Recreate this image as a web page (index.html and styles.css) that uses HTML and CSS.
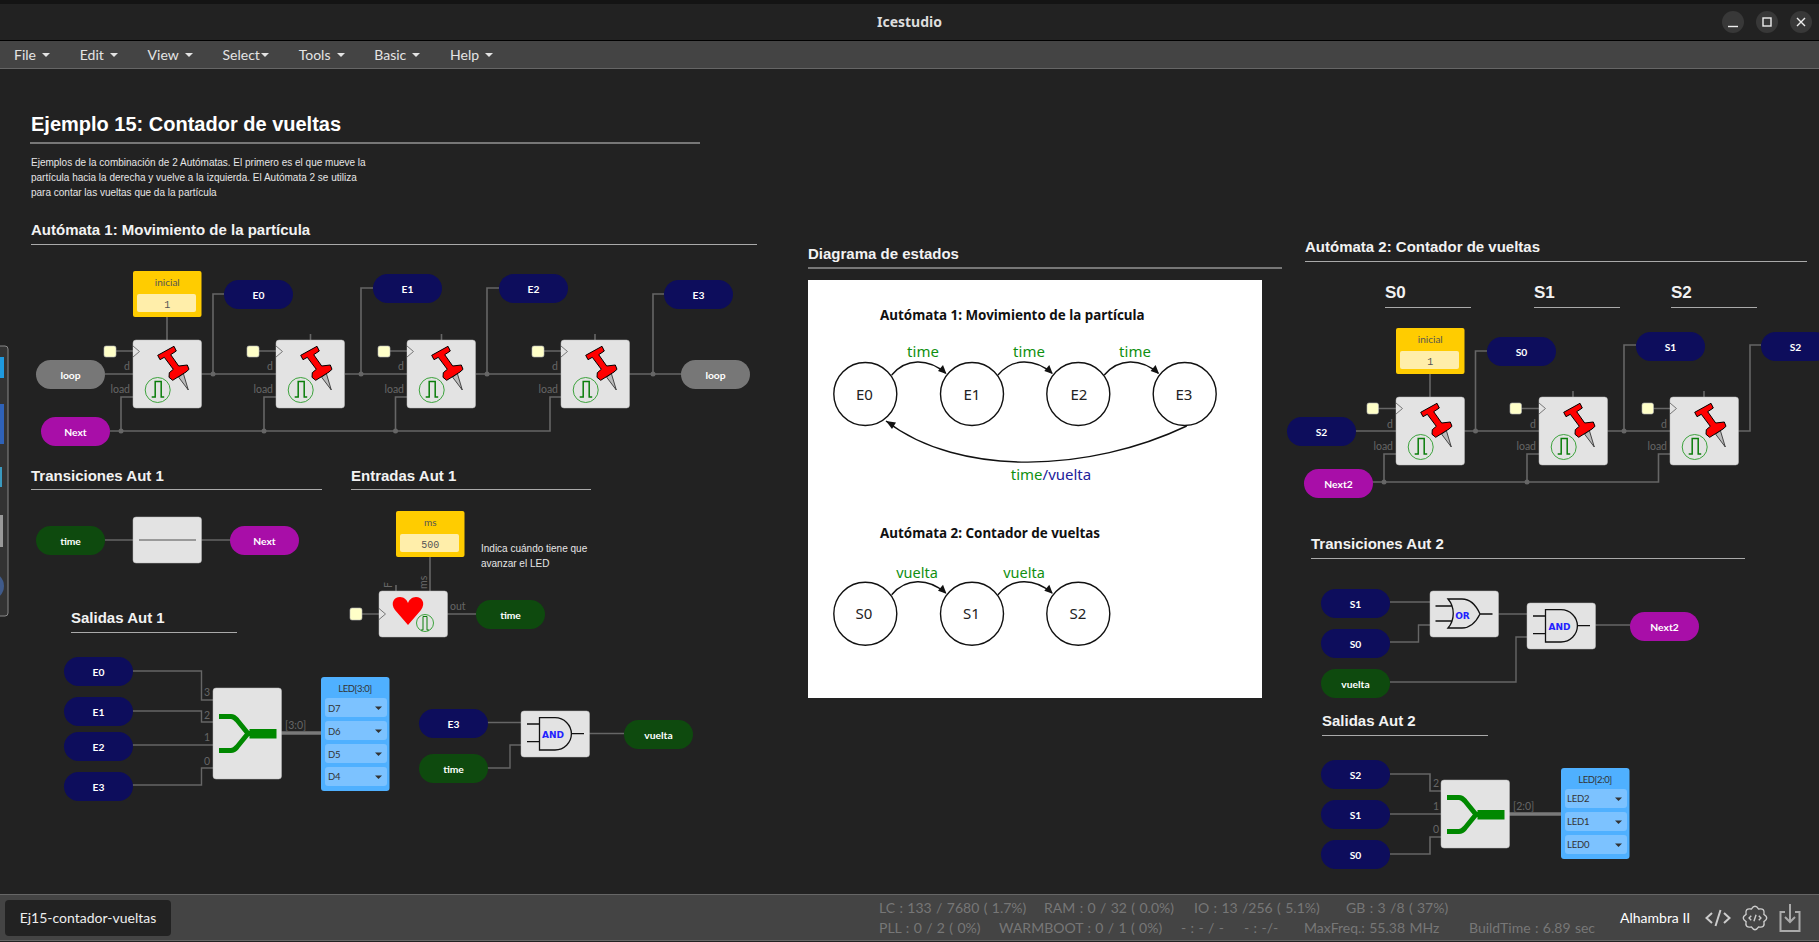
FILE: index.html
```html
<!DOCTYPE html>
<html lang="es">
<head>
    <meta charset="UTF-8">
    <title>Icestudio</title>
    <link rel="stylesheet" href="styles.css">
</head>
<body class="app">
    <header class="titlebar">
        <span class="app_name">Icestudio</span>
        <div class="win_btns">
            <button class="win_btn"><svg width="22" height="22" viewBox="0 0 22 22"><path d="M6 15.5h10"/></svg></button>
            <button class="win_btn"><svg width="22" height="22" viewBox="0 0 22 22"><rect x="7" y="7" width="8" height="8"/></svg></button>
            <button class="win_btn"><svg width="22" height="22" viewBox="0 0 22 22"><path d="M7 7l8 8M15 7l-8 8"/></svg></button>
        </div>
    </header>
    <nav class="menubar">
        <span class="menu_item">File<i class="caret"></i></span>
        <span class="menu_item">Edit<i class="caret"></i></span>
        <span class="menu_item">View<i class="caret"></i></span>
        <span class="menu_item">Select<i class="caret tight"></i></span>
        <span class="menu_item">Tools<i class="caret"></i></span>
        <span class="menu_item">Basic<i class="caret"></i></span>
        <span class="menu_item">Help<i class="caret"></i></span>
    </nav>

    <main class="canvas">
        <!-- same coordinates as the window, the bars above take 69px -->
        <svg class="board" width="1819" height="825" viewBox="0 69 1819 825">
            <defs>
                <g id="pin">
                    <path class="needle" d="M45.7 37.3L50.3 33.3L55.3 50Z"/>
                    <path class="pin_red" d="M24.7 15.3L41 6.3L43.3 11L37.7 14.7L45.7 26L54.3 25L56 29.3L53 32L39.7 40.3L36 37.3L36.3 32.7L40.3 29.3L31.3 17.3L27 19.7Z"/>
                </g>
                <g id="clk">
                    <circle class="clk_ring" r="12.5"/>
                    <path class="clk_wave" d="M-6 7H-2.5V-8.5H3.5V7H6.5"/>
                </g>
                <path id="chev" class="chev" d="M0 0L6.5 5.5L0 11"/>
                <g id="ff">
                    <rect class="block tall"/>
                    <use href="#chev" y="6"/>
                    <use href="#pin"/>
                    <use href="#clk" x="24.7" y="50"/>
                </g>
                <g id="and_gate">
                    <rect class="block"/>
                    <path class="gate" d="M18.5 6.7H34A16.4 16.15 0 0 1 34 39H18.5ZM6 13H18.5M6 30.7H18.5M50.7 22.6H63"/>
                </g>
                <g id="join">
                    <path class="join_arm" d="M6 4.5H18Q21 4.5 24 8L35 21.5Q36.5 21.5 38 21.5M6 38.5H18Q21 38.5 24 35L35 21.5"/>
                    <rect class="join_bar" x="36.5" y="17" width="27" height="9.5"/>
                </g>
                <g id="led_item">
                    <rect class="led_item" width="62" height="19" rx="3"/>
                    <path class="led_arrow" d="M50 8.5H57L53.5 12Z"/>
                </g>
                <path id="arc" class="arc" d="M891.7 375C906 358 928 358 945.7 373.3"/>
                <path id="head" class="arrow_head" d="M946.5 374L938 371L943 365Z"/>
            </defs>

            <!-- left dock peeking out -->
            <rect class="dock" x="-3" y="346" width="11" height="270" rx="3"/>
            <rect class="dock_a" x="0" y="357" width="4" height="21"/>
            <rect class="dock_b" x="0" y="404" width="4" height="40"/>
            <rect class="dock_c" x="0" y="467" width="2" height="20"/>
            <rect class="dock_d" x="0" y="515" width="3" height="32"/>
            <circle class="dock_e" cx="-10" cy="586" r="14"/>

            <!-- headings -->
            <text class="h_big" x="31" y="131">Ejemplo 15: Contador de vueltas</text>
            <path class="rule_big" d="M30 143H700"/>
            <text class="para" x="31" y="166">Ejemplos de la combinación de 2 Autómatas. El primero es el que mueve la</text>
            <text class="para" x="31" y="181">partícula hacia la derecha y vuelve a la izquierda. El Autómata 2 se utiliza</text>
            <text class="para" x="31" y="196">para contar las vueltas que da la partícula</text>

            <text class="h_sec" x="31" y="235">Autómata 1: Movimiento de la partícula</text>
            <path class="rule" d="M31 244.5H757"/>
            <text class="h_sec" x="31" y="481">Transiciones Aut 1</text>
            <path class="rule" d="M31 489.5H322"/>
            <text class="h_sec" x="351" y="481">Entradas Aut 1</text>
            <path class="rule" d="M351 489.5H591"/>
            <text class="h_sec" x="71" y="623">Salidas Aut 1</text>
            <path class="rule" d="M71 632.5H237"/>
            <text class="h_sec" x="808" y="259">Diagrama de estados</text>
            <path class="rule_big" d="M808 268H1282"/>
            <text class="h_sec" x="1305" y="252">Autómata 2: Contador de vueltas</text>
            <path class="rule" d="M1305 261.5H1807"/>
            <text class="h_s" x="1385" y="298">S0</text>
            <path class="rule" d="M1385 307.5H1471"/>
            <text class="h_s" x="1534" y="298">S1</text>
            <path class="rule" d="M1534 307.5H1620"/>
            <text class="h_s" x="1671" y="298">S2</text>
            <path class="rule" d="M1671 307.5H1757"/>
            <text class="h_sec" x="1311" y="549">Transiciones Aut 2</text>
            <path class="rule" d="M1311 558.5H1745"/>
            <text class="h_sec" x="1322" y="726">Salidas Aut 2</text>
            <path class="rule" d="M1322 735.5H1488"/>

            <!-- wires -->
            <path class="wire" d="M105 374H133M201 374H276M345 374H407M476 374H561M629 374H681M213 374V294H224M361 374V288H373M487 374V288H499M653 374V294H664"/>
            <path class="wire" d="M110 431H550V397H561M121 431V397H133M264 431V397H276M395.5 431V397H407"/>
            <path class="wire" d="M167 317V340M310.5 334V340M441.5 334V340M595 334V340M116 351H133M259 351H276M390 351H407M544 351H561"/>
            <path class="wire" d="M104 540H230M430 557V591M361 614H379M447 614H476M396 585V591"/>
            <path class="wire thin" d="M132 671H201.5V700H213M132 711H201.5V722H213M132 745H213M132 785H201.5V768H213"/>
            <path class="wire bus" d="M281 733H321"/>
            <path class="wire thin" d="M487 722.5H521M487 768H510V745H521M589 733.5H624"/>
            <path class="wire" d="M1355 431H1396M1464 431H1539M1607 431H1670M1738 431H1750V345H1761M1475.5 431V351H1487M1624 431V345H1636"/>
            <path class="wire" d="M1372 482H1658.5V454H1670M1384 482V454H1396M1527 482V454H1539"/>
            <path class="wire" d="M1430 374V397M1573 391V397M1704 391V397M1378 408.5H1396M1521 408.5H1539M1653 408.5H1670"/>
            <path class="wire thin" d="M1390 602H1430M1390 642H1418.5V625H1430M1498 614H1527M1390 682H1516V637H1527M1595 625H1630"/>
            <path class="wire" d="M1390 774H1430V791H1441M1390 814H1441M1390 854H1430V837H1441"/>
            <path class="wire bus" d="M1509 814H1561"/>
            <g class="dots">
                <circle cx="213" cy="374" r="2.5"/><circle cx="361" cy="374" r="2.5"/><circle cx="487" cy="374" r="2.5"/><circle cx="653" cy="374" r="2.5"/>
                <circle cx="121" cy="431" r="2.5"/><circle cx="264" cy="431" r="2.5"/><circle cx="395.5" cy="431" r="2.5"/>
                <circle cx="1475.5" cy="431" r="2.5"/><circle cx="1624" cy="431" r="2.5"/><circle cx="1384" cy="482" r="2.5"/><circle cx="1527" cy="482" r="2.5"/>
            </g>

            <!-- Automata 1 -->
            <g transform="translate(133,271)">
                <rect class="const"/><rect class="const_in"/>
                <text class="const_name" x="34.3" y="15">inicial</text><text class="const_val" x="34.3" y="36.5">1</text>
            </g>
            <use href="#ff" x="133" y="340"/>
            <use href="#ff" x="276" y="340"/>
            <use href="#ff" x="407" y="340"/>
            <use href="#ff" x="561" y="340"/>
            <rect class="clk_in" x="104" y="346" width="12" height="11" rx="2"/>
            <rect class="clk_in" x="247" y="346" width="12" height="11" rx="2"/>
            <rect class="clk_in" x="378" y="346" width="12" height="11" rx="2"/>
            <rect class="clk_in" x="532" y="346" width="12" height="11" rx="2"/>
            <g class="port">
                <text x="130" y="370" text-anchor="end">d</text><text x="130" y="393" text-anchor="end">load</text>
                <text x="273" y="370" text-anchor="end">d</text><text x="273" y="393" text-anchor="end">load</text>
                <text x="404" y="370" text-anchor="end">d</text><text x="404" y="393" text-anchor="end">load</text>
                <text x="558" y="370" text-anchor="end">d</text><text x="558" y="393" text-anchor="end">load</text>
            </g>
            <g class="pill navy" transform="translate(224,280)"><rect/><text x="34.5" y="19">E0</text></g>
            <g class="pill navy" transform="translate(373,274)"><rect/><text x="34.5" y="19">E1</text></g>
            <g class="pill navy" transform="translate(499,274)"><rect/><text x="34.5" y="19">E2</text></g>
            <g class="pill navy" transform="translate(664,280)"><rect/><text x="34.5" y="19">E3</text></g>
            <g class="pill grey" transform="translate(36,360)"><rect/><text x="34.5" y="19">loop</text></g>
            <g class="pill grey" transform="translate(681,360)"><rect/><text x="34.5" y="19">loop</text></g>
            <g class="pill purple" transform="translate(41,417)"><rect/><text x="34.5" y="19">Next</text></g>

            <!-- Transiciones Aut 1 -->
            <g class="pill green" transform="translate(36,526)"><rect/><text x="34.5" y="19">time</text></g>
            <rect class="block" x="133" y="517"/>
            <path class="gate_line" d="M139 540H196"/>
            <g class="pill purple" transform="translate(230,526)"><rect/><text x="34.5" y="19">Next</text></g>

            <!-- Entradas Aut 1 -->
            <g transform="translate(396,511)">
                <rect class="const"/><rect class="const_in"/>
                <text class="const_name" x="34.3" y="15">ms</text><text class="const_val" x="34.3" y="36.5">500</text>
            </g>
            <text class="para" x="481" y="552">Indica cuándo tiene que</text>
            <text class="para" x="481" y="567">avanzar el LED</text>
            <rect class="block" x="379" y="591"/>
            <use href="#chev" x="379" y="608.5"/>
            <path class="heart" d="M408 625L395 610C390 603 394 597 400 597C404 597 407 600 408 603C409 600 412 597 416 597C422 597 426 603 421 610Z"/>
            <circle class="clk_ring" cx="425" cy="623" r="8.5"/>
            <path class="clk_wave small" d="M421 630H423V616.5H427V630H429"/>
            <rect class="clk_in" x="350" y="608" width="12" height="12" rx="2"/>
            <g class="port">
                <text x="450" y="610">out</text>
                <text transform="translate(392,588) rotate(-90)">F</text>
                <text transform="translate(427,589) rotate(-90)">ms</text>
            </g>
            <g class="pill green" transform="translate(476,600)"><rect/><text x="34.5" y="19">time</text></g>

            <!-- Salidas Aut 1 -->
            <g class="pill navy" transform="translate(64,657)"><rect/><text x="34.5" y="19">E0</text></g>
            <g class="pill navy" transform="translate(64,697)"><rect/><text x="34.5" y="19">E1</text></g>
            <g class="pill navy" transform="translate(64,732)"><rect/><text x="34.5" y="19">E2</text></g>
            <g class="pill navy" transform="translate(64,772)"><rect/><text x="34.5" y="19">E3</text></g>
            <rect class="block join_tall" x="213" y="688"/>
            <use href="#join" x="213" y="712"/>
            <g class="port">
                <text x="204" y="696">3</text><text x="204" y="719">2</text><text x="204" y="741">1</text><text x="204" y="765">0</text>
                <text x="285" y="729">[3:0]</text>
            </g>
            <rect class="led_box" x="321" y="677" width="68.5" height="114" rx="3"/>
            <text class="led_title" x="355" y="692">LED[3:0]</text>
            <use href="#led_item" x="325" y="698"/><text class="led_text" x="328" y="712">D7</text>
            <use href="#led_item" x="325" y="721"/><text class="led_text" x="328" y="735">D6</text>
            <use href="#led_item" x="325" y="744"/><text class="led_text" x="328" y="758">D5</text>
            <use href="#led_item" x="325" y="767"/><text class="led_text" x="328" y="780">D4</text>

            <g class="pill navy" transform="translate(419,709)"><rect/><text x="34.5" y="19">E3</text></g>
            <g class="pill green" transform="translate(419,754)"><rect/><text x="34.5" y="19">time</text></g>
            <use href="#and_gate" x="521" y="711"/>
            <text class="gate_text" x="553" y="737.5">AND</text>
            <g class="pill green" transform="translate(624,720)"><rect/><text x="34.5" y="19">vuelta</text></g>

            <!-- state diagram -->
            <rect class="paper" x="808" y="280" width="454" height="418"/>
            <text class="st_title" x="880" y="320">Autómata 1: Movimiento de la partícula</text>
            <text class="st_trans" x="923" y="357">time</text>
            <text class="st_trans" x="1029" y="357">time</text>
            <text class="st_trans" x="1135" y="357">time</text>
            <use href="#arc"/><use href="#head"/>
            <use href="#arc" x="106.3"/><use href="#head" x="106.3"/>
            <use href="#arc" x="212.6"/><use href="#head" x="212.6"/>
            <circle class="st_node" cx="865.3" cy="394" r="31.5"/><text class="st_name" x="864.5" y="399.5">E0</text>
            <circle class="st_node" cx="972" cy="394" r="31.5"/><text class="st_name" x="972" y="399.5">E1</text>
            <circle class="st_node" cx="1078.3" cy="394" r="31.5"/><text class="st_name" x="1079" y="399.5">E2</text>
            <circle class="st_node" cx="1184.7" cy="394" r="31.5"/><text class="st_name" x="1184" y="399.5">E3</text>
            <path class="arc" d="M1186.7 426C1090 472 960 478 886 421"/>
            <path class="arrow_head" d="M886 421L896 422.5L892 429Z"/>
            <text class="st_trans" x="1051" y="480"><tspan>time</tspan><tspan class="st_slash">/vuelta</tspan></text>

            <text class="st_title" x="880" y="538">Autómata 2: Contador de vueltas</text>
            <text class="st_trans narrow" x="917" y="578">vuelta</text>
            <text class="st_trans narrow" x="1024" y="578">vuelta</text>
            <use href="#arc" y="219.7"/><use href="#head" y="219.7"/>
            <use href="#arc" x="106.3" y="219.7"/><use href="#head" x="106.3" y="219.7"/>
            <circle class="st_node" cx="865.3" cy="613.7" r="31.5"/><text class="st_name" x="864" y="619">S0</text>
            <circle class="st_node" cx="972" cy="613.7" r="31.5"/><text class="st_name" x="971.5" y="619">S1</text>
            <circle class="st_node" cx="1078.3" cy="613.7" r="31.5"/><text class="st_name" x="1078" y="619">S2</text>

            <!-- Automata 2 -->
            <g transform="translate(1396,328)">
                <rect class="const"/><rect class="const_in"/>
                <text class="const_name" x="34.3" y="15">inicial</text><text class="const_val" x="34.3" y="36.5">1</text>
            </g>
            <use href="#ff" x="1396" y="397"/>
            <use href="#ff" x="1539" y="397"/>
            <use href="#ff" x="1670" y="397"/>
            <rect class="clk_in" x="1367" y="403" width="11.5" height="11" rx="2"/>
            <rect class="clk_in" x="1510" y="403" width="11.5" height="11" rx="2"/>
            <rect class="clk_in" x="1642" y="403" width="11.5" height="11" rx="2"/>
            <g class="port">
                <text x="1393" y="428" text-anchor="end">d</text><text x="1393" y="450" text-anchor="end">load</text>
                <text x="1536" y="428" text-anchor="end">d</text><text x="1536" y="450" text-anchor="end">load</text>
                <text x="1667" y="428" text-anchor="end">d</text><text x="1667" y="450" text-anchor="end">load</text>
            </g>
            <g class="pill navy" transform="translate(1487,337)"><rect/><text x="34.5" y="19">S0</text></g>
            <g class="pill navy" transform="translate(1636,332)"><rect/><text x="34.5" y="19">S1</text></g>
            <g class="pill navy" transform="translate(1761,332)"><rect/><text x="34.5" y="19">S2</text></g>
            <g class="pill navy" transform="translate(1287,417)"><rect/><text x="34.5" y="19">S2</text></g>
            <g class="pill purple" transform="translate(1304,469)"><rect/><text x="34.5" y="19">Next2</text></g>

            <!-- Transiciones Aut 2 -->
            <g class="pill navy" transform="translate(1321,589)"><rect/><text x="34.5" y="19">S1</text></g>
            <g class="pill navy" transform="translate(1321,629)"><rect/><text x="34.5" y="19">S0</text></g>
            <g class="pill green" transform="translate(1321,669)"><rect/><text x="34.5" y="19">vuelta</text></g>
            <rect class="block" x="1430" y="591"/>
            <path class="gate" d="M1448 599H1462C1470 599 1476 605 1480 614C1476 622 1470 628 1462 628H1448C1455 620 1455 607 1448 599ZM1435.5 606H1452M1435.5 621H1452M1480 614H1492.5"/>
            <text class="gate_text" x="1462.5" y="618.5">OR</text>
            <use href="#and_gate" x="1527" y="603"/>
            <text class="gate_text" x="1559.5" y="629.5">AND</text>
            <g class="pill purple" transform="translate(1630,612)"><rect/><text x="34.5" y="19">Next2</text></g>

            <!-- Salidas Aut 2 -->
            <g class="pill navy" transform="translate(1321,760)"><rect/><text x="34.5" y="19">S2</text></g>
            <g class="pill navy" transform="translate(1321,800)"><rect/><text x="34.5" y="19">S1</text></g>
            <g class="pill navy" transform="translate(1321,840)"><rect/><text x="34.5" y="19">S0</text></g>
            <rect class="block tall" x="1441" y="780"/>
            <use href="#join" x="1441" y="793"/>
            <g class="port">
                <text x="1433" y="787">2</text><text x="1433" y="810">1</text><text x="1433" y="833">0</text>
                <text x="1513" y="810">[2:0]</text>
            </g>
            <rect class="led_box" x="1561" y="768" width="68.5" height="91" rx="3"/>
            <text class="led_title" x="1595" y="783">LED[2:0]</text>
            <use href="#led_item" x="1565" y="789"/><text class="led_text" x="1567" y="802">LED2</text>
            <use href="#led_item" x="1565" y="812"/><text class="led_text" x="1567" y="825">LED1</text>
            <use href="#led_item" x="1565" y="835"/><text class="led_text" x="1567" y="848">LED0</text>
        </svg>
    </main>

    <footer class="statusbar">
        <div class="tab">Ej15-contador-vueltas</div>
        <div class="stats">
            <div class="stat_row one">
                <span>LC : 133 / 7680 ( 1.7%)</span>
                <span>RAM : 0 / 32 ( 0.0%)</span>
                <span>IO : 13 /256 ( 5.1%)</span>
                <span>GB : 3 /8 ( 37%)</span>
            </div>
            <div class="stat_row two">
                <span>PLL : 0 / 2 ( 0%)</span>
                <span>WARMBOOT : 0 / 1 ( 0%)</span>
                <span>- : - / -</span>
                <span>- : -/-</span>
                <span>MaxFreq.: 55.38 MHz</span>
                <span>BuildTime : 6.89 sec</span>
            </div>
        </div>
        <div class="board_name">Alhambra II</div>
        <div class="tools">
            <svg class="tool" width="26" height="18" viewBox="0 0 26 18"><path d="M7 4L1.5 9L7 14M19 4L24.5 9L19 14M15.5 1L10.5 17"/></svg>
            <svg class="tool gear" width="28" height="28" viewBox="-1 -1 26 26"><path d="M20.3 8.6Q25.5 12 20.3 15.4Q21.5 21.5 15.4 20.3Q12 25.5 8.6 20.3Q2.5 21.5 3.7 15.4Q-1.5 12 3.7 8.6Q2.5 2.5 8.6 3.7Q12 -1.5 15.4 3.7Q21.5 2.5 20.3 8.6Z"/><path d="M8.5 10L6.5 12L8.5 14M15.5 10L17.5 12L15.5 14M13 9L11 15"/></svg>
            <svg class="tool down" width="22" height="30" viewBox="0 0 22 30"><path d="M6 9H1.5V28H20.5V9H16M11 1V19M6 14L11 19L16 14"/></svg>
        </div>
    </footer>
</body>
</html>
```

FILE: styles.css
```css
body {
    margin: 0;
}
.app {
    width: 1819px;
    height: 942px;
    overflow: hidden;
    display: flex;
    flex-direction: column;
    background: #222;
    font-family: "Lato", "Noto Sans", sans-serif;
}

/* window title */
.titlebar {
    box-sizing: border-box;
    height: 41px;
    flex: none;
    display: flex;
    align-items: center;
    justify-content: center;
    padding-bottom: 2px;
    position: relative;
    background: #222;
    border-top: 4px solid #141414;
    border-bottom: 1px solid #000;
}
.app_name {
    font-family: "Noto Sans", sans-serif;
    font-size: 14px;
    font-weight: 700;
    color: #ddd;
}
.win_btns {
    position: absolute;
    right: 7px;
    top: 7px;
    display: flex;
    gap: 12px;
}
.win_btn {
    width: 22px;
    height: 22px;
    padding: 0;
    border: 0;
    border-radius: 50%;
    background: #383838;
}
.win_btn svg {
    display: block;
    fill: none;
    stroke: #eee;
    stroke-width: 1.4;
}

/* menu */
.menubar {
    box-sizing: border-box;
    height: 28px;
    flex: none;
    display: flex;
    align-items: center;
    gap: 29.8px;
    padding-left: 14px;
    background: #444;
    border-bottom: 1px solid #666;
    font-size: 14px;
    color: #e4e4e4;
}
.menu_item {
    display: flex;
    align-items: center;
}
.caret {
    margin-left: 6px;
    border-left: 4px solid transparent;
    border-right: 4px solid transparent;
    border-top: 4px solid #e4e4e4;
}
.caret.tight {
    margin-left: 1px;
}

/* canvas */
.canvas {
    flex: 1;
    min-height: 0;
}
.board {
    display: block;
}
.board text {
    font-family: "Lato", sans-serif;
}
.h_big {
    font-family: "Liberation Sans", sans-serif !important;
    font-size: 20px;
    font-weight: 700;
    fill: #fff;
}
.h_sec {
    font-family: "Liberation Sans", sans-serif !important;
    font-size: 15px;
    font-weight: 700;
    fill: #f2f2f2;
}
.h_s {
    font-family: "Liberation Sans", sans-serif !important;
    font-size: 17px;
    font-weight: 700;
    fill: #f2f2f2;
}
.para {
    font-family: "Liberation Sans", sans-serif !important;
    font-size: 10px;
    fill: #e6e6e6;
}
.rule {
    stroke: #aaa;
    stroke-width: 1;
}
.rule_big {
    stroke: #777;
    stroke-width: 2;
}
.wire {
    fill: none;
    stroke: #666;
    stroke-width: 1.6;
}
.wire.thin {
    stroke-width: 1.4;
}
.wire.bus {
    stroke: #7a7a7a;
    stroke-width: 3.5;
}
.dots {
    fill: #666;
}
.port text {
    font-size: 10.5px;
    fill: #666;
}

.block {
    width: 68.5px;
    height: 46px;
    rx: 3px;
    fill: #e3e3e3;
    stroke: #bbb;
    stroke-width: 0.5;
}
.block.tall {
    height: 68px;
}
.block.join_tall {
    height: 91px;
}
.chev {
    fill: #e3e3e3;
    stroke: #777;
    stroke-width: 1;
}
.pin_red {
    fill: #f00;
    stroke: #000;
    stroke-width: 1;
}
.needle {
    fill: #bbb;
    stroke: #222;
    stroke-width: 0.8;
}
.clk_ring {
    fill: none;
    stroke: #3da33d;
    stroke-width: 1;
}
.clk_wave {
    fill: none;
    stroke: #0a7d0a;
    stroke-width: 1.5;
}
.clk_wave.small {
    stroke-width: 1;
}
.clk_in {
    fill: #ffffc8;
    stroke: #bbb;
    stroke-width: 0.6;
}
.const {
    width: 68.5px;
    height: 46px;
    rx: 2px;
    fill: #fc0;
}
.const_in {
    x: 4px;
    y: 23px;
    width: 59px;
    height: 18px;
    rx: 2px;
    fill: #fea;
}
.const_name {
    font-size: 10px;
    fill: #555;
    text-anchor: middle;
}
.const_val {
    font-family: "Liberation Mono", monospace !important;
    font-size: 10px;
    fill: #555;
    text-anchor: middle;
}

.pill rect {
    width: 69px;
    height: 29px;
    rx: 14.5px;
}
.pill text {
    font-size: 10.3px;
    font-weight: 700;
    fill: #fff;
    text-anchor: middle;
}
.navy rect {
    fill: #0d0d5c;
}
.grey rect {
    fill: #777;
}
.purple rect {
    fill: #a80ea8;
}
.green rect {
    fill: #0e4a0e;
}

.gate {
    fill: none;
    stroke: #111;
    stroke-width: 1.3;
}
.gate_line {
    stroke: #999;
    stroke-width: 2;
}
.gate_text {
    font-family: "DejaVu Sans", sans-serif !important;
    font-size: 9px;
    font-weight: 700;
    fill: #2222ff;
    text-anchor: middle;
}
.heart {
    fill: #f00;
}
.join_arm {
    fill: none;
    stroke: #080;
    stroke-width: 5;
}
.join_bar {
    fill: #080;
}
.led_box {
    fill: #4fb0ff;
}
.led_item {
    fill: #7cc2ff;
}
.led_arrow {
    fill: #333;
}
.led_title {
    font-size: 9.5px;
    letter-spacing: -0.4px;
    fill: #333;
    text-anchor: middle;
}
.led_text {
    font-size: 9.5px;
    letter-spacing: -0.2px;
    fill: #333;
}

/* state diagram */
.paper {
    fill: #fff;
}
.st_title {
    font-family: "Noto Sans", sans-serif !important;
    font-size: 13.4px;
    font-weight: 700;
    fill: #111;
}
.st_trans {
    font-family: "Noto Sans", sans-serif !important;
    font-size: 15px;
    fill: #109010;
    text-anchor: middle;
}
.st_trans.narrow {
    font-size: 14.5px;
}
.st_slash {
    fill: #22229a;
}
.st_node {
    fill: none;
    stroke: #111;
    stroke-width: 1.4;
}
.st_name {
    font-family: "Noto Sans", sans-serif !important;
    font-size: 15px;
    fill: #222;
    text-anchor: middle;
}
.arc {
    fill: none;
    stroke: #111;
    stroke-width: 1.4;
}
.arrow_head {
    fill: #111;
}

/* dock on the left edge */
.dock {
    fill: #333;
    stroke: #888;
    stroke-width: 1;
}
.dock_a {
    fill: #1e9ae0;
}
.dock_b {
    fill: #2f62b8;
}
.dock_c {
    fill: #3a9ac0;
}
.dock_d {
    fill: #999;
}
.dock_e {
    fill: #3f5a8a;
}

/* footer */
.statusbar {
    box-sizing: border-box;
    height: 47px;
    flex: none;
    margin-bottom: 1px;
    display: flex;
    align-items: center;
    padding-left: 5px;
    background: #444;
    border-top: 1px solid #666;
    border-bottom: 1px solid #666;
}
.tab {
    width: 166px;
    height: 36px;
    flex: none;
    display: flex;
    align-items: center;
    justify-content: center;
    background: #222;
    border-radius: 4px;
    font-size: 14px;
    color: #eee;
}
.stats {
    margin-left: 708px;
    width: 736px;
    flex: none;
    display: flex;
    flex-direction: column;
    gap: 3px;
    font-size: 14px;
    word-spacing: 0.8px;
    color: #777;
}
.stat_row {
    display: flex;
    white-space: nowrap;
    line-height: 17px;
}
.stat_row span {
    flex: none;
}
.one span:nth-child(1) { width: 165px; }
.one span:nth-child(2) { width: 150px; }
.one span:nth-child(3) { width: 152px; }
.two span:nth-child(1) { width: 120px; }
.two span:nth-child(2) { width: 182px; }
.two span:nth-child(3) { width: 63px; }
.two span:nth-child(4) { width: 60px; }
.two span:nth-child(5) { width: 165px; }
.board_name {
    margin-left: 5px;
    font-size: 14px;
    color: #fff;
    white-space: nowrap;
}
.tools {
    margin-left: 15px;
    display: flex;
    align-items: center;
    gap: 10px;
}
.tool {
    display: block;
    fill: none;
    stroke: #ccc;
    stroke-width: 2;
}
.tool.gear {
    stroke-width: 1.3;
}
.tool.down {
    stroke: #aaa;
    stroke-width: 2;
}
```
